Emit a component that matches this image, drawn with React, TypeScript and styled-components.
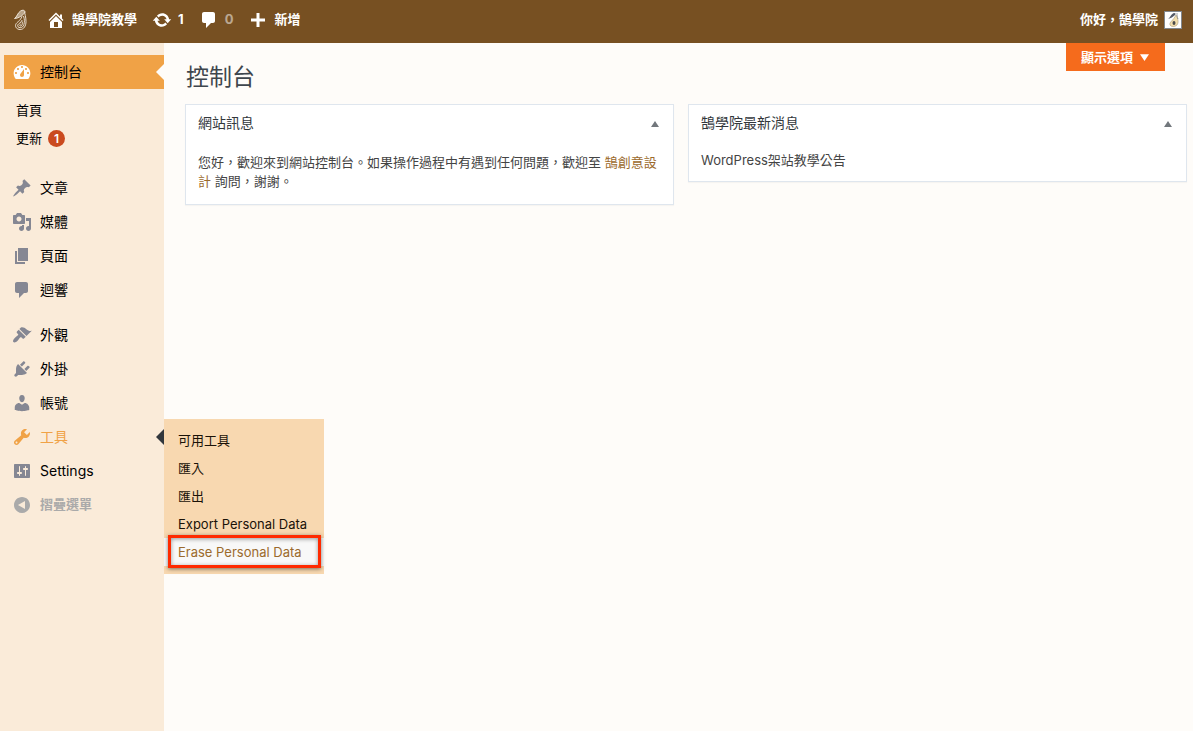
import React from 'react';
import styled, { createGlobalStyle } from 'styled-components';

const Global = createGlobalStyle`
  * { box-sizing: border-box; }
  body {
    margin: 0;
    background: #fefcf9;
    color: #444;
    font: 13px/19px Inter, "Noto Sans CJK TC", sans-serif;
  }
  h1, h2, p, ul { margin: 0; padding: 0; font-weight: 400; }
  ul { list-style: none; }
  a { color: inherit; text-decoration: none; }
  button { border: 0; padding: 0; background: none; color: inherit; font: inherit; cursor: pointer; }
`;

const Page = styled.div`
  display: flex;
  flex-direction: column;
  min-height: 100vh;
`;

const AdminBar = styled.header`
  display: flex;
  align-items: center;
  justify-content: space-between;
  height: 43px;
  padding: 0 11px 4px 11px;
  background: #775022;
  color: #fff;
  font-weight: 700;
`;

const BarGroup = styled.nav`
  display: flex;
  align-items: center;
  gap: 15px;
`;

const BarLink = styled.a<{ $dim?: boolean }>`
  display: flex;
  align-items: center;
  gap: 6px;
  span { opacity: ${p => (p.$dim ? 0.5 : 1)}; }
`;

const Avatar = styled.svg`
  width: 18px;
  height: 18px;
  border: 1px solid #82878c;
  background: #fff;
`;

const Body = styled.div`
  display: flex;
  flex: 1;
`;

const Sidebar = styled.nav`
  flex: 0 0 164px;
  padding: 12px 0 0 4px;
  background: #faebd9;
  color: #000;
`;

const MenuItem = styled.li<{ $spaced?: boolean }>`
  position: relative;
  margin-top: ${p => (p.$spaced ? 11 : 0)}px;
`;

const MenuLink = styled.a<{ $tone?: 'current' | 'open' | 'muted' }>`
  display: flex;
  align-items: center;
  gap: 8px;
  width: 100%;
  height: 34px;
  padding: 0 8px;
  font-size: ${p => (p.$tone === 'muted' ? 13 : 14)}px;
  font-weight: ${p => (p.$tone === 'muted' ? 700 : 400)};
  background: ${p => (p.$tone === 'current' ? '#f0a246' : 'transparent')};
  color: ${p => (p.$tone === 'open' ? '#f0a246' : p.$tone === 'muted' ? '#aaa' : '#000')};
  svg { color: ${p => (p.$tone === 'current' ? '#fff' : p.$tone ? 'inherit' : '#858793')}; }
`;

const MenuText = styled.span`
  padding-bottom: 2px;
`;

const Pointer = styled.span<{ $color: string }>`
  position: absolute;
  right: 0;
  top: 9px;
  border: 8px solid transparent;
  border-left-width: 0;
  border-right-color: ${p => p.$color};
`;

const SubMenu = styled.ul`
  padding: 7px 12px 8px;
`;

const SubLink = styled.a`
  display: flex;
  align-items: center;
  gap: 6px;
  height: 28px;
`;

const Badge = styled.span`
  width: 17px;
  height: 17px;
  border-radius: 9px;
  background: #ca4a1f;
  color: #fff;
  font-size: 12px;
  font-weight: 600;
  line-height: 17px;
  text-align: center;
`;

const Flyout = styled.ul`
  position: absolute;
  z-index: 2;
  left: 100%;
  top: -1px;
  width: 160px;
  padding: 7px 0 8px;
  background: #f8d8b0;
`;

const FlyoutLink = styled.a<{ $active?: boolean }>`
  position: relative;
  display: block;
  padding: 0 14px;
  line-height: 28px;
  background: ${p => (p.$active ? '#f8f8f8' : 'transparent')};
  color: ${p => (p.$active ? '#9b6a2c' : '#1a1208')};
`;

const Highlight = styled.span`
  position: absolute;
  inset: -3px 3px -2px 4px;
  border: 3px solid #ff2a00;
  box-shadow: 0 1px 4px rgba(0, 0, 0, 0.5), inset 0 1px 4px rgba(0, 0, 0, 0.4);
`;

const Main = styled.main`
  flex: 1;
  min-width: 0;
  padding: 0 6px 40px 21px;
`;

const TitleRow = styled.div`
  display: flex;
  align-items: flex-start;
  justify-content: space-between;
  height: 61px;
  padding: 0 22px 0 1px;
`;

const Title = styled.h1`
  padding-top: 20px;
  color: #3f464d;
  font-size: 23px;
  line-height: 29px;
`;

const ScreenOptions = styled.button`
  display: flex;
  align-items: center;
  gap: 7px;
  height: 28px;
  padding: 0 16px 0 15px;
  background: #f56b1c;
  color: #fff;
  font-weight: 700;
`;

const Columns = styled.div`
  display: grid;
  grid-template-columns: 489fr 499fr;
  align-items: start;
  gap: 14px;
`;

const Panel = styled.section`
  border: 1px solid #dfe6ee;
  background: #fff;
  box-shadow: 0 1px 1px rgba(0, 0, 0, 0.03);
`;

const PanelHead = styled.div`
  display: flex;
  align-items: center;
  justify-content: space-between;
  height: 36px;
  padding: 0 14px 0 12px;
  h2 { padding-bottom: 2px; color: #32373c; font-size: 14px; }
`;

const PanelBody = styled.p<{ $compact?: boolean }>`
  padding: ${p => (p.$compact ? '10px 12px 11px' : '12px 12px 13px')};
  a { color: #9b6a2c; }
`;

const icons = {
  home: <path d="M16 8.5l1.53 1.53-1.06 1.06L10 4.6l-6.47 6.49-1.06-1.06L10 2.5l4 4v-2h2v4zm-6-2.46l6 5.99V18H4v-5.97zM12 17v-5H8v5h4z" />,
  update: <path d="M10.2 3.28c3.53 0 6.43 2.61 6.92 6h2.08l-3.5 4-3.5-4h2.32c-.45-1.97-2.21-3.45-4.32-3.45-1.45 0-2.73.71-3.54 1.78L4.95 5.66C6.23 4.2 8.11 3.28 10.2 3.28zm-.4 13.44c-3.52 0-6.43-2.61-6.92-6H.8l3.5-4c1.17 1.33 2.33 2.67 3.5 4H5.48c.45 1.97 2.21 3.45 4.32 3.45 1.45 0 2.73-.71 3.54-1.78l1.71 1.95c-1.28 1.46-3.15 2.38-5.25 2.38z" />,
  comment: <path d="M5 2h9c1.1 0 2 .9 2 2v7c0 1.1-.9 2-2 2h-2l-5 5v-5H5c-1.1 0-2-.9-2-2V4c0-1.1.9-2 2-2z" />,
  plus: <path d="M17 8.5v3h-5.5V17h-3v-5.5H3v-3h5.5V3h3v5.5H17z" />,
  dashboard: <path d="M3.76 17h12.48c1.34-1.52 2.13-3.5 2.13-5.68C18.37 6.7 14.62 3 10 3s-8.37 3.7-8.37 8.32c0 2.18.79 4.16 2.13 5.68zM10 4c.55 0 1 .45 1 1s-.45 1-1 1-1-.45-1-1 .45-1 1-1zM6 6c.55 0 1 .45 1 1s-.45 1-1 1-1-.45-1-1 .45-1 1-1zm8 0c.55 0 1 .45 1 1s-.45 1-1 1-1-.45-1-1 .45-1 1-1zm-5.37 5.55L12 7v6c0 1.1-.9 2-2 2s-2-.9-2-2c0-.57.24-1.08.63-1.45zM4 10c.55 0 1 .45 1 1s-.45 1-1 1-1-.45-1-1 .45-1 1-1zm12 0c.55 0 1 .45 1 1s-.45 1-1 1-1-.45-1-1 .45-1 1-1z" fillRule="evenodd" />,
  post: <path d="M10.44 3.02l1.82-1.82 6.36 6.35-1.83 1.82c-1.05-.68-2.48-.57-3.41.36l-.75.75c-.92.93-1.04 2.35-.35 3.41l-1.83 1.82-2.41-2.41-2.8 2.79c-.42.42-3.38 2.71-3.8 2.29s1.86-3.39 2.28-3.81l2.79-2.79L4.1 9.36l1.83-1.82c1.05.69 2.48.57 3.4-.36l.75-.75c.93-.92 1.05-2.35.36-3.41z" />,
  media: <path fillRule="evenodd" d="M13 11V4c0-.55-.45-1-1-1h-1.67L9 1H5L3.67 3H2c-.55 0-1 .45-1 1v7c0 .55.45 1 1 1h10c.55 0 1-.45 1-1zM7 4.5c1.38 0 2.5 1.12 2.5 2.5S8.38 9.5 7 9.5 4.5 8.38 4.5 7 5.62 4.5 7 4.5zM14 6h5v10.5c0 1.38-1.12 2.5-2.5 2.5S14 17.88 14 16.5s1.12-2.5 2.5-2.5c.17 0 .34.02.5.05V9h-3V6zm-4 8.05V13h2v3.5c0 1.38-1.12 2.5-2.5 2.5S7 17.88 7 16.5 8.12 14 9.5 14c.17 0 .34.02.5.05z" />,
  page: <path d="M6 15V2h10v13H6zm-1 1h8v2H3V5h2v11z" />,
  brush: <path d="M14.48 11.06L7.41 3.99l1.5-1.5c.5-.56 2.3-.47 3.51.32 1.21.8 1.43 1.28 2.91 2.1 1.18.64 2.45 1.26 4.45.85zm-.71.71L6.7 4.7 4.93 6.47c-.39.39-.39 1.02 0 1.41l1.06 1.06c.39.39.39 1.03 0 1.42-.6.6-1.43 1.11-2.21 1.69-.35.26-.7.53-1.01.84C1.43 14.23.4 16.08 1.4 17.07c.99 1 2.84-.03 4.18-1.36.31-.31.58-.66.85-1.02.57-.78 1.08-1.61 1.69-2.21.39-.39 1.02-.39 1.41 0l1.06 1.06c.39.39 1.02.39 1.41 0z" />,
  plug: <path d="M13.11 4.36L9.87 7.6 8 5.73l3.24-3.24c.35-.34 1.05-.2 1.56.32.52.51.66 1.21.31 1.55zm-8 1.77l.91-1.12 9.01 9.01-1.19.84c-.71.71-2.63 1.16-3.82 1.16H6.14L4.9 17.26c-.59.59-1.54.59-2.12 0-.59-.58-.59-1.53 0-2.12l1.24-1.24v-3.88c0-1.13.4-3.19 1.09-3.89zm7.26 3.97l3.24-3.24c.34-.35 1.04-.21 1.55.31.52.51.66 1.21.31 1.55l-3.24 3.25z" />,
  user: <path d="M10 9.25c-2.27 0-2.73-3.44-2.73-3.44C7 4.02 7.82 2 9.97 2c2.16 0 2.98 2.02 2.71 3.81 0 0-.41 3.44-2.68 3.44zm0 2.57L12.72 10c2.39 0 4.52 2.33 4.52 4.53v2.49s-3.65 1.13-7.24 1.13c-3.65 0-7.24-1.13-7.24-1.13v-2.49c0-2.25 1.94-4.48 4.47-4.48z" />,
  tool: <path fillRule="evenodd" d="M16.68 9.77c-1.34 1.34-3.3 1.67-4.95.99l-5.41 6.52c-.99.99-2.59.99-3.58 0s-.99-2.59 0-3.57l6.52-5.42c-.68-1.65-.35-3.61.99-4.95 1.28-1.28 3.12-1.62 4.72-1.06l-2.89 2.89 2.82 2.82 2.86-2.87c.53 1.58.18 3.39-1.08 4.65zM3.81 16.21c.4.39 1.04.39 1.43 0 .4-.4.4-1.04 0-1.43-.39-.4-1.03-.4-1.43 0-.39.39-.39 1.03 0 1.43z" />,
  settings: <path fillRule="evenodd" d="M18 16V4c0-.55-.45-1-1-1H3c-.55 0-1 .45-1 1v12c0 .55.45 1 1 1h14c.55 0 1-.45 1-1zM8 11h1c.55 0 1 .45 1 1s-.45 1-1 1H8v1.5c0 .28-.22.5-.5.5s-.5-.22-.5-.5V13H6c-.55 0-1-.45-1-1s.45-1 1-1h1V5.5c0-.28.22-.5.5-.5s.5.22.5.5V11zm5-2h-1c-.55 0-1-.45-1-1s.45-1 1-1h1V5.5c0-.28.22-.5.5-.5s.5.22.5.5V7h1c.55 0 1 .45 1 1s-.45 1-1 1h-1v5.5c0 .28-.22.5-.5.5s-.5-.22-.5-.5V9z" />,
  collapse: <path fillRule="evenodd" d="M10 2c4.42 0 8 3.58 8 8s-3.58 8-8 8-8-3.58-8-8 3.58-8 8-8zm3 12V6l-7 4z" />,
};

type IconName = keyof typeof icons;

const IconSvg = styled.svg`
  flex: none;
  width: 20px;
  height: 20px;
  fill: currentColor;
`;

const Icon = ({ name }: { name: IconName }) => (
  <IconSvg viewBox="0 0 20 20" aria-hidden="true">{icons[name]}</IconSvg>
);

const Logo = () => (
  <svg width="20" height="22" viewBox="0 0 20 22" fill="none" stroke="#f3ebe0" strokeWidth=".9" aria-hidden="true">
    <path d="M3.500 9.500C6 8 6.500 4 9.500 2c2-1.300 4-.9 4.300.5.300 1.800-3 4.500-5.300 5.600-1.500.8-3 1.300-5 1.400z" fill="#f3ebe0" fillOpacity=".55" />
    <path d="M13.800 2.500C13.500 5 15 7.500 15 12.500c0 4.500-2.200 8-5.800 8-3.400 0-5.400-2.600-4.400-5.200.9-2.300 4.700-3.300 6.200-8" />
    <path d="M12.500 7c1 3 1.200 6 .4 8.500-.7 2.200-2.100 3.200-3.700 3.200-2 0-3-1.500-2.300-2.900.8-1.500 3.200-2 4.300-4.800" />
    <path d="M11.200 12.500c.5 2.500-.3 4.500-1.600 4.500-1.200 0-1.100-1.200 0-1.900" />
  </svg>
);

const Triangle = ({ down, size = 8 }: { down?: boolean; size?: number }) => (
  <svg width={size} height={size - 2} viewBox="0 0 8 6" aria-hidden="true">
    <path d={down ? 'M0 0h8L4 6z' : 'M0 6h8L4 0z'} fill="currentColor" />
  </svg>
);

const Toggle = styled.button`
  display: flex;
  padding-top: 2px;
  color: #72777c;
`;

interface Entry {
  icon: IconName;
  label: string;
  spaced?: boolean;
}

const content: Entry[] = [
  { icon: 'post', label: '文章', spaced: true },
  { icon: 'media', label: '媒體' },
  { icon: 'page', label: '頁面' },
  { icon: 'comment', label: '迴響' },
  { icon: 'brush', label: '外觀', spaced: true },
  { icon: 'plug', label: '外掛' },
  { icon: 'user', label: '帳號' },
];

const tools = ['可用工具', '匯入', '匯出', 'Export Personal Data', 'Erase Personal Data'];

export default function App() {
  return (
    <Page>
      <Global />
      <AdminBar>
        <BarGroup aria-label="工具列">
          <BarLink href="#" aria-label="鵠學院"><Logo /></BarLink>
          <BarLink href="#"><Icon name="home" /><span>鵠學院教學</span></BarLink>
          <BarLink href="#"><Icon name="update" /><span>1</span></BarLink>
          <BarLink href="#" $dim><Icon name="comment" /><span>0</span></BarLink>
          <BarLink href="#"><Icon name="plus" /><span>新增</span></BarLink>
        </BarGroup>
        <BarLink href="#">
          <span>你好，鵠學院</span>
          <Avatar viewBox="0 0 16 16" aria-hidden="true">
            <path d="M11 3c2 4 3 7 1 10-2 2-6 2-7 0-1-3 3-4 6-10z" fill="#f3dfae" stroke="#9a8a68" strokeWidth=".5" />
            <path d="M3 7c2-1 3-5 6-6 2 0 2 1 1 2C8 5 6 6 3 7z" fill="#555a66" />
            <ellipse cx="9" cy="11" rx="1.5" ry="2" fill="#4a4a4a" />
            <path d="M12 1c0 2 0 4 1 6" stroke="#777" fill="none" strokeWidth=".7" />
          </Avatar>
        </BarLink>
      </AdminBar>
      <Body>
        <Sidebar aria-label="主選單">
          <ul>
            <MenuItem>
              <MenuLink href="#" $tone="current"><Icon name="dashboard" /><MenuText>控制台</MenuText></MenuLink>
              <Pointer $color="#fefcf9" />
            </MenuItem>
            <li>
              <SubMenu>
                <li><SubLink href="#">首頁</SubLink></li>
                <li><SubLink href="#">更新<Badge>1</Badge></SubLink></li>
              </SubMenu>
            </li>
            {content.map(e => (
              <MenuItem key={e.label} $spaced={e.spaced}>
                <MenuLink href="#"><Icon name={e.icon} /><MenuText>{e.label}</MenuText></MenuLink>
              </MenuItem>
            ))}
            <MenuItem>
              <MenuLink href="#" $tone="open"><Icon name="tool" /><MenuText>工具</MenuText></MenuLink>
              <Pointer $color="#32373c" />
              <Flyout>
                {tools.map((t, i) => (
                  <li key={t}>
                    <FlyoutLink href="#" $active={i === 4}>{t}{i === 4 && <Highlight />}</FlyoutLink>
                  </li>
                ))}
              </Flyout>
            </MenuItem>
            <MenuItem>
              <MenuLink href="#"><Icon name="settings" /><MenuText>Settings</MenuText></MenuLink>
            </MenuItem>
            <MenuItem>
              <MenuLink as="button" $tone="muted"><Icon name="collapse" /><MenuText>摺疊選單</MenuText></MenuLink>
            </MenuItem>
          </ul>
        </Sidebar>
        <Main>
          <TitleRow>
            <Title>控制台</Title>
            <ScreenOptions>顯示選項<Triangle down size={9} /></ScreenOptions>
          </TitleRow>
          <Columns>
            <Panel>
              <PanelHead><h2>網站訊息</h2><Toggle aria-label="切換面板"><Triangle /></Toggle></PanelHead>
              <PanelBody>
                您好，歡迎來到網站控制台。如果操作過程中有遇到任何問題，歡迎至 <a href="#">鵠創意設計</a> 詢問，謝謝。
              </PanelBody>
            </Panel>
            <Panel>
              <PanelHead><h2>鵠學院最新消息</h2><Toggle aria-label="切換面板"><Triangle /></Toggle></PanelHead>
              <PanelBody $compact>WordPress架站教學公告</PanelBody>
            </Panel>
          </Columns>
        </Main>
      </Body>
    </Page>
  );
}
